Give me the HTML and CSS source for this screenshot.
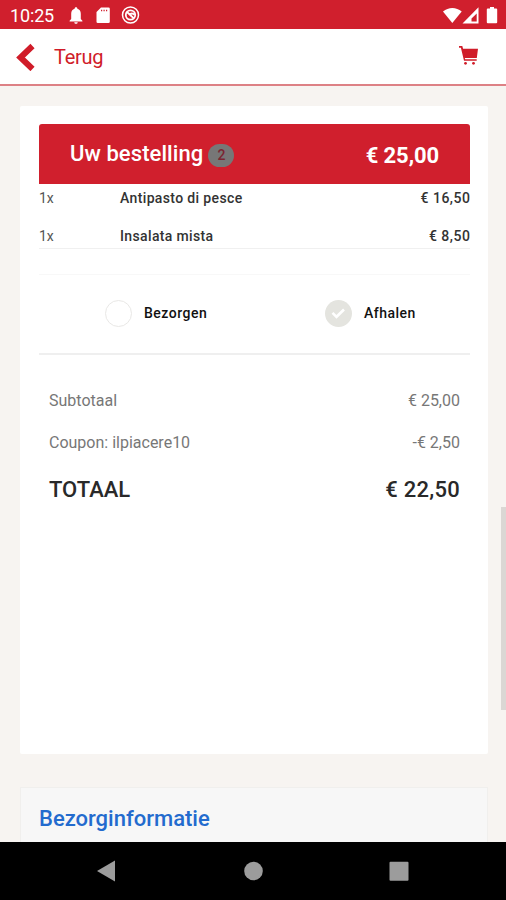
FILE: index.html
```html
<!DOCTYPE html>
<html lang="nl">
<head>
<meta charset="utf-8">
<title>Uw bestelling</title>
<link rel="stylesheet" href="styles.css">
</head>
<body>
<div class="status">
  <span class="clock">10:25</span>
  <svg class="status-left" width="72" height="20" viewBox="0 0 72 20">
    <path fill="#fff" d="M8 1.200c.9 0 1.400.6 1.400 1.500 2.300.7 3.400 2.600 3.400 5V13l1.600 1.700v.7H1.600v-.7L3.200 13V7.700c0-2.400 1.100-4.300 3.400-5 0-.9.500-1.500 1.400-1.500zM6.300 16.200h3.400c0 1-.7 1.500-1.700 1.500s-1.700-.5-1.700-1.500z"/>
    <path fill="#fff" fill-rule="evenodd" d="M33 1.500h7.500q1.300 0 1.300 1.300v12.900q0 1.300-1.300 1.300H29.800q-1.300 0-1.300-1.300V6zM33 3.800v1.500h1.200V3.800zm2.500 0v1.500h1.200V3.800zM38 3.800v1.500h1.200V3.800z"/>
    <g fill="none" stroke="#fff"><circle cx="62.500" cy="9" r="8" stroke-width="1.500"/><circle cx="62.500" cy="9" r="4.700" stroke-width="1.800"/><path stroke-width="1.800" d="M59 6l7 6.500M62 8.300c1.500-1.200 3-1 4.500.5"/></g>
  </svg>
  <svg class="status-right" width="58" height="20" viewBox="0 0 58 20">
    <path fill="#fff" d="M1 5.500C6.500.8 14.200.8 19.700 5.500L10.300 17z"/>
    <path fill="#fff" fill-rule="evenodd" d="M36.500 1.300V17.500H20.500zM34.700 7.500l-5.200 5v3h5.200z"/>
    <path fill="#fff" d="M48 1h4v1.600h2.200q1 0 1 1v12.600q0 1-1 1h-8.400q-1 0-1-1V3.600q0-1 1-1H48z"/>
  </svg>
</div>
<header class="bar">
  <svg width="20" height="28" viewBox="0 0 20 28"><path d="M17.500 3L5.500 14.500 17.500 26" fill="none" stroke="#d01c29" stroke-width="6"/></svg>
  <span class="back">Terug</span>
  <svg class="cart" width="22" height="22" viewBox="0 0 22 22">
    <path fill="#d01c29" d="M1 1h3.300l.8 2.700H20l-1.200 9.200H6.800l.4 1.400h11.500v1.500H6L2.900 2.700H1z"/><circle cx="7.500" cy="18.300" r="1.400" fill="#d01c29"/><circle cx="15.500" cy="18.300" r="1.400" fill="#d01c29"/>
  </svg>
</header>
<main>
  <section class="card">
    <div class="order-head">
      <h1>Uw bestelling</h1><span class="badge">2</span><strong>€ 25,00</strong>
    </div>
    <div class="items">
      <div class="item"><span>1x</span><b>Antipasto di pesce</b><b class="price">€ 16,50</b></div>
      <div class="item"><span>1x</span><b>Insalata mista</b><b class="price">€ 8,50</b></div>
    </div>
    <div class="options">
      <label class="option"><span class="radio"></span><span class="opt-text">Bezorgen</span></label>
      <label class="option"><span class="radio on"><svg width="26" height="26" viewBox="0 0 26 26"><path d="M7.500 12.800l4 4L19 9.500" fill="none" stroke="#fff" stroke-width="2.600"/></svg></span><span class="opt-text">Afhalen</span></label>
    </div>
    <div class="totals">
      <div class="row"><span>Subtotaal</span><span>€ 25,00</span></div>
      <div class="row"><span>Coupon: ilpiacere10</span><span>-€ 2,50</span></div>
      <div class="row total"><span>TOTAAL</span><span class="total-amount">€ 22,50</span></div>
    </div>
  </section>
  <section class="info"><h2>Bezorginformatie</h2></section>
  <div class="scrollbar"></div>
</main>
<nav>
  <svg width="506" height="58" viewBox="0 0 506 58"><g fill="#9c9c9c"><path d="M97 29l18-10.500v21z"/><circle cx="253.500" cy="29" r="9.300"/><rect x="389.500" y="19.700" width="19" height="19" rx="1"/></g></svg>
</nav>
</body>
</html>
```
FILE: styles.css
```css
* { box-sizing: border-box; }
body { margin: 0; width: 506px; height: 900px; overflow: hidden; display: flex; flex-direction: column; background: #f7f4f1; font-family: Roboto, sans-serif; color: #333; }
.status { height: 29px; flex: none; background: #d01f2d; display: flex; align-items: center; padding: 2px 6px 0 10px; color: #fff; }
.clock { font-size: 18px; line-height: 22px; width: 58px; letter-spacing: -.15px; }
.status-right { margin-left: auto; }
.bar { height: 57px; flex: none; background: #fff; border-bottom: 2px solid #dd8185; display: flex; align-items: center; padding: 0 26px 0 15px; color: #d01c29; }
.back { margin: 1px 0 0 19px; font-size: 20px; letter-spacing: -.3px; }
.cart { margin-left: auto; margin-top: -2px; }
main { position: relative; flex: 1; min-height: 0; overflow: hidden; padding: 20px 18px 0 20px; }
.card { height: 648px; background: #fff; padding: 18px 18px 0 19px; border-radius: 2px; }
.order-head { height: 60px; display: flex; align-items: center; padding: 0 31px; background: #d01f2d; color: #fff; border-radius: 3px 3px 0 0; }
h1 { margin: 0; font-size: 22px; line-height: 28px; font-weight: 500; letter-spacing: .08px; }
.badge { width: 26px; height: 23px; margin: 2px 0 0 5px; border-radius: 12px; background: #777; color: #7b2632; font-size: 14px; font-weight: 500; line-height: 23px; text-align: center; }
.order-head strong { margin: 4px 0 0 auto; font-size: 22px; line-height: 28px; font-weight: 700; letter-spacing: -.1px; }
.items { height: 65px; border-bottom: 1px solid #f0f0f0; font-size: 14px; }
.item { display: flex; height: 38px; line-height: 28px; }
.item span { width: 81px; color: #555; }
.item b { font-weight: 500; color: #333; letter-spacing: .36px; }
.item .price { margin-left: auto; margin-right: -.4px; letter-spacing: .5px; }
.options { margin-top: 25px; height: 81px; border-top: 1px solid #f8f8f8; border-bottom: 2px solid #efefef; display: grid; grid-template-columns: 220px 1fr; padding-left: 66px; }
.option { display: flex; align-items: center; gap: 12px; padding-bottom: 1px; color: #111; }
.radio { width: 27px; height: 27px; border: 1px solid #e9e8e6; border-radius: 50%; }
.radio.on { background: #e4e4df; border: 0; }
.opt-text { font-size: 14px; font-weight: 500; letter-spacing: .5px; margin-top: -1px; }
.totals { padding: 25px 10px 0; color: #777; font-size: 16px; }
.row { display: flex; justify-content: space-between; height: 42px; line-height: 42px; }
.total { height: 50px; line-height: 51px; font-size: 22px; font-weight: 500; color: #292929; }
.total-amount { letter-spacing: .25px; }
.info { margin-top: 33px; height: 80px; background: #f7f7f7; border: 1px solid #f0efed; padding: 17px 18px; }
h2 { margin: 0; font-size: 22px; line-height: 28px; font-weight: 500; color: #236bce; }
.scrollbar { position: absolute; right: 0; top: 421px; width: 5px; height: 203px; background: #dbd7d4; }
nav { height: 58px; flex: none; background: #000; }
nav svg { display: block; }
```
